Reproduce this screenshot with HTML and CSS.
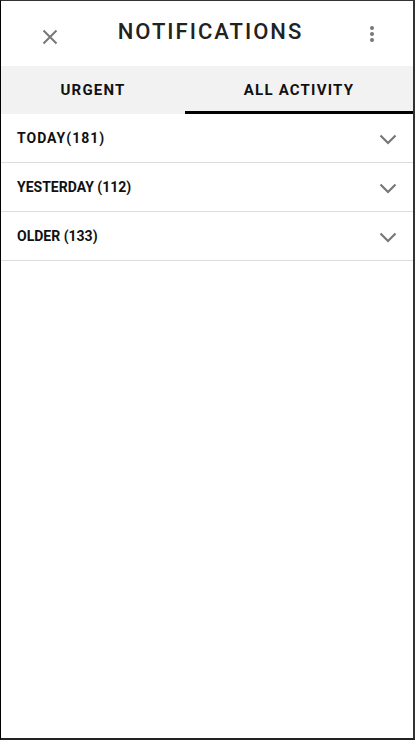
FILE: index.html
```html
<!DOCTYPE html>
<html lang="en">
<head>
<meta charset="utf-8">
<title>Notifications</title>
<link rel="stylesheet" href="styles.css">
</head>
<body>
<div class="frame">
  <header class="header">
    <button class="icon-btn close" aria-label="Close">
      <svg width="16" height="16" viewBox="0 0 16 16"><path d="M1.5 1.5L14.5 14.5M14.5 1.5L1.5 14.5" stroke="#777" stroke-width="2" fill="none"/></svg>
    </button>
    <h1 class="title">NOTIFICATIONS</h1>
    <button class="icon-btn more" aria-label="More">
      <svg width="6" height="18" viewBox="0 0 6 18"><circle cx="3" cy="3" r="2" fill="#777"/><circle cx="3" cy="9" r="2" fill="#777"/><circle cx="3" cy="15" r="2" fill="#777"/></svg>
    </button>
  </header>
  <nav class="tabs">
    <div class="tab tab-urgent">URGENT</div>
    <div class="tab tab-all active">ALL ACTIVITY</div>
  </nav>
  <ul class="groups">
    <li class="group"><span class="group-label wide">TODAY(181)</span><svg class="chev" width="18" height="11" viewBox="0 0 18 11"><path d="M1.5 1.5L9 9L16.5 1.5" stroke="#777" stroke-width="2.2" fill="none"/></svg></li>
    <li class="group"><span class="group-label">YESTERDAY (112)</span><svg class="chev" width="18" height="11" viewBox="0 0 18 11"><path d="M1.5 1.5L9 9L16.5 1.5" stroke="#777" stroke-width="2.2" fill="none"/></svg></li>
    <li class="group"><span class="group-label">OLDER (133)</span><svg class="chev" width="18" height="11" viewBox="0 0 18 11"><path d="M1.5 1.5L9 9L16.5 1.5" stroke="#777" stroke-width="2.2" fill="none"/></svg></li>
  </ul>
</div>
</body>
</html>
```

FILE: styles.css
```css
* { box-sizing: border-box; }
html, body { margin: 0; padding: 0; }
body {
  width: 415px;
  height: 740px;
  font-family: Roboto, "Liberation Sans", sans-serif;
  background: #fff;
}
.frame {
  width: 415px;
  height: 740px;
  border-top: 1px solid #333;
  border-left: 1px solid #000;
  border-right: 2px solid #333;
  border-bottom: 2px solid #222;
  display: flex;
  flex-direction: column;
}
.header {
  height: 65px;
  display: flex;
  align-items: center;
  justify-content: space-between;
  padding: 0 33px 0 40px;
}
.icon-btn {
  border: 0;
  background: none;
  padding: 0;
  display: flex;
  align-items: center;
  justify-content: center;
}
.close { margin-top: 6px; width: 17px; }
.more { margin-top: 0; width: 17px; }
.title {
  margin: 0 0 5px 0;
  font-size: 22px;
  font-weight: 500;
  letter-spacing: 2px;
  color: #222;
}
.tabs {
  height: 48px;
  background: #f2f2f2;
  display: flex;
}
.tab {
  display: flex;
  align-items: center;
  justify-content: center;
  font-size: 15px;
  font-weight: 700;
  letter-spacing: 1.2px;
  color: #111;
}
.tab-urgent { flex: 0 0 184px; }
.tab-all { flex: 1 1 auto; }
.tab.active { border-bottom: 3px solid #000; padding-top: 3px; }
.groups {
  list-style: none;
  margin: 0;
  padding: 0;
}
.group {
  height: 49px;
  border-bottom: 1px solid #ddd;
  display: flex;
  align-items: center;
  justify-content: space-between;
  padding: 0 16px 0 16px;
}
.group-label {
  font-size: 14px;
  font-weight: 700;
  color: #111;
  letter-spacing: 0;
}
.group-label.wide { letter-spacing: 1px; }
.chev { margin-top: 2px; }
```
